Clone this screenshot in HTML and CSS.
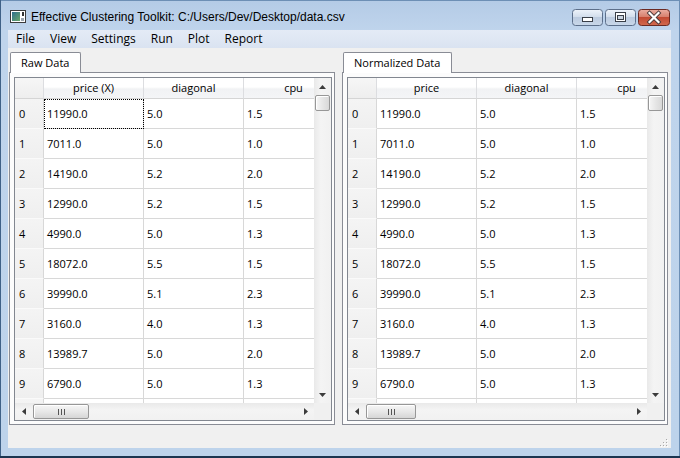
FILE: index.html
```html
<!DOCTYPE html>
<html>
<head>
<meta charset="utf-8">
<link rel="stylesheet" href="styles.css">
</head>
<body>
<div class="window">
  <div class="titlebar">
    <svg class="appicon" width="16" height="13" viewBox="0 0 16 13">
      <defs>
        <linearGradient id="ig" x1="0" y1="0" x2="1" y2="1">
          <stop offset="0" stop-color="#2e6f8e"/>
          <stop offset="1" stop-color="#6aa86a"/>
        </linearGradient>
      </defs>
      <rect x="0.5" y="0.5" width="15" height="12" fill="#fff" stroke="#3b3b3b"/>
      <rect x="2" y="2" width="8" height="9" fill="url(#ig)"/>
      <rect x="11" y="8" width="3" height="3" fill="#9aa4ae"/>
      <rect x="12" y="2" width="2" height="4" fill="#333"/>
    </svg>
    <span class="title">Effective Clustering Toolkit: C:/Users/Dev/Desktop/data.csv</span>
    <div class="caption-buttons">
      <svg class="cbtn" width="31" height="17" viewBox="0 0 31 17">
        <defs>
          <linearGradient id="bg1" x1="0" y1="0" x2="0" y2="1">
            <stop offset="0" stop-color="#eef3fa"/>
            <stop offset="0.45" stop-color="#d3deec"/>
            <stop offset="0.5" stop-color="#bccbdf"/>
            <stop offset="1" stop-color="#c9d8ea"/>
          </linearGradient>
        </defs>
        <rect x="0.5" y="0.5" width="30" height="16" rx="3" fill="url(#bg1)" stroke="#5c6f8a"/>
        <rect x="10.5" y="8.5" width="10" height="4" fill="#fff" stroke="#3a3f48"/>
      </svg>
      <svg class="cbtn" width="31" height="17" viewBox="0 0 31 17">
        <rect x="0.5" y="0.5" width="30" height="16" rx="3" fill="url(#bg1)" stroke="#5c6f8a"/>
        <rect x="10.5" y="3.5" width="10" height="9" fill="#fff" stroke="#3a3f48"/>
        <rect x="12.5" y="6.5" width="6" height="4" fill="#c8d2de" stroke="#3a3f48"/>
      </svg>
      <svg class="cbtn" width="32" height="17" viewBox="0 0 32 17">
        <defs>
          <linearGradient id="bg2" x1="0" y1="0" x2="0" y2="1">
            <stop offset="0" stop-color="#eaaea1"/>
            <stop offset="0.45" stop-color="#d7806e"/>
            <stop offset="0.5" stop-color="#c24a33"/>
            <stop offset="1" stop-color="#d26a4f"/>
          </linearGradient>
        </defs>
        <rect x="0.5" y="0.5" width="31" height="16" rx="3" fill="url(#bg2)" stroke="#6b2a22"/>
        <path d="M11.5 4 L20.5 13 M20.5 4 L11.5 13" stroke="#4a3a3a" stroke-width="4" stroke-linecap="square"/>
        <path d="M11.5 4 L20.5 13 M20.5 4 L11.5 13" stroke="#fff" stroke-width="2.2" stroke-linecap="square"/>
      </svg>
    </div>
  </div>

  <div class="client">
    <div class="menubar">
      <span class="menu">File</span>
      <span class="menu">View</span>
      <span class="menu">Settings</span>
      <span class="menu">Run</span>
      <span class="menu">Plot</span>
      <span class="menu">Report</span>
    </div>

    <div class="panes">
      <!-- Left tab widget -->
      <div class="tabwidget">
        <div class="tabbar"><div class="tab">Raw Data</div></div>
        <div class="pane">
          <div class="table">
            <div class="viewport">
              <div class="grid">
                <div class="hcell corner"></div><div class="hcell">price (X)</div><div class="hcell">diagonal</div><div class="hcell">cpu</div>
                <div class="rh">0</div><div class="cell focus">11990.0</div><div class="cell">5.0</div><div class="cell">1.5</div>
                <div class="rh">1</div><div class="cell">7011.0</div><div class="cell">5.0</div><div class="cell">1.0</div>
                <div class="rh">2</div><div class="cell">14190.0</div><div class="cell">5.2</div><div class="cell">2.0</div>
                <div class="rh">3</div><div class="cell">12990.0</div><div class="cell">5.2</div><div class="cell">1.5</div>
                <div class="rh">4</div><div class="cell">4990.0</div><div class="cell">5.0</div><div class="cell">1.3</div>
                <div class="rh">5</div><div class="cell">18072.0</div><div class="cell">5.5</div><div class="cell">1.5</div>
                <div class="rh">6</div><div class="cell">39990.0</div><div class="cell">5.1</div><div class="cell">2.3</div>
                <div class="rh">7</div><div class="cell">3160.0</div><div class="cell">4.0</div><div class="cell">1.3</div>
                <div class="rh">8</div><div class="cell">13989.7</div><div class="cell">5.0</div><div class="cell">2.0</div>
                <div class="rh">9</div><div class="cell">6790.0</div><div class="cell">5.0</div><div class="cell">1.3</div>
                <div class="rh"></div><div class="cell"></div><div class="cell"></div><div class="cell"></div>
              </div>
            </div>
            <div class="vscroll">
              <div class="sbtn"><svg width="7" height="4" viewBox="0 0 7 4"><path d="M0 4 L3.5 0 L7 4 Z" fill="#3c3c3c"/></svg></div>
              <div class="vthumb"></div>
              <div class="sfill"></div>
              <div class="sbtn"><svg width="7" height="4" viewBox="0 0 7 4"><path d="M0 0 L3.5 4 L7 0 Z" fill="#3c3c3c"/></svg></div>
            </div>
            <div class="hscroll">
              <div class="sbtn"><svg width="4" height="7" viewBox="0 0 4 7"><path d="M4 0 L0 3.5 L4 7 Z" fill="#3c3c3c"/></svg></div>
              <div class="hthumb wide"><span class="grip-lines"><i></i><i></i><i></i></span></div>
              <div class="sfill"></div>
              <div class="sbtn"><svg width="4" height="7" viewBox="0 0 4 7"><path d="M0 0 L4 3.5 L0 7 Z" fill="#3c3c3c"/></svg></div>
            </div>
            <div class="scorner"></div>
          </div>
        </div>
      </div>

      <!-- Right tab widget -->
      <div class="tabwidget">
        <div class="tabbar"><div class="tab">Normalized Data</div></div>
        <div class="pane">
          <div class="table">
            <div class="viewport">
              <div class="grid">
                <div class="hcell corner"></div><div class="hcell">price</div><div class="hcell">diagonal</div><div class="hcell">cpu</div>
                <div class="rh">0</div><div class="cell">11990.0</div><div class="cell">5.0</div><div class="cell">1.5</div>
                <div class="rh">1</div><div class="cell">7011.0</div><div class="cell">5.0</div><div class="cell">1.0</div>
                <div class="rh">2</div><div class="cell">14190.0</div><div class="cell">5.2</div><div class="cell">2.0</div>
                <div class="rh">3</div><div class="cell">12990.0</div><div class="cell">5.2</div><div class="cell">1.5</div>
                <div class="rh">4</div><div class="cell">4990.0</div><div class="cell">5.0</div><div class="cell">1.3</div>
                <div class="rh">5</div><div class="cell">18072.0</div><div class="cell">5.5</div><div class="cell">1.5</div>
                <div class="rh">6</div><div class="cell">39990.0</div><div class="cell">5.1</div><div class="cell">2.3</div>
                <div class="rh">7</div><div class="cell">3160.0</div><div class="cell">4.0</div><div class="cell">1.3</div>
                <div class="rh">8</div><div class="cell">13989.7</div><div class="cell">5.0</div><div class="cell">2.0</div>
                <div class="rh">9</div><div class="cell">6790.0</div><div class="cell">5.0</div><div class="cell">1.3</div>
                <div class="rh"></div><div class="cell"></div><div class="cell"></div><div class="cell"></div>
              </div>
            </div>
            <div class="vscroll">
              <div class="sbtn"><svg width="7" height="4" viewBox="0 0 7 4"><path d="M0 4 L3.5 0 L7 4 Z" fill="#3c3c3c"/></svg></div>
              <div class="vthumb"></div>
              <div class="sfill"></div>
              <div class="sbtn"><svg width="7" height="4" viewBox="0 0 7 4"><path d="M0 0 L3.5 4 L7 0 Z" fill="#3c3c3c"/></svg></div>
            </div>
            <div class="hscroll">
              <div class="sbtn"><svg width="4" height="7" viewBox="0 0 4 7"><path d="M4 0 L0 3.5 L4 7 Z" fill="#3c3c3c"/></svg></div>
              <div class="hthumb narrow"><span class="grip-lines"><i></i><i></i><i></i></span></div>
              <div class="sfill"></div>
              <div class="sbtn"><svg width="4" height="7" viewBox="0 0 4 7"><path d="M0 0 L4 3.5 L0 7 Z" fill="#3c3c3c"/></svg></div>
            </div>
            <div class="scorner"></div>
          </div>
        </div>
      </div>
    </div>

    <div class="statusbar">
      <svg class="sizegrip" width="8" height="8" viewBox="0 0 8 8">
        <g fill="#a8a8a8">
          <rect x="6" y="0" width="1" height="1"/>
          <rect x="3" y="3" width="1" height="1"/><rect x="6" y="3" width="1" height="1"/>
          <rect x="0" y="6" width="1" height="1"/><rect x="3" y="6" width="1" height="1"/><rect x="6" y="6" width="1" height="1"/>
        </g>
        <g fill="#ffffff">
          <rect x="7" y="1" width="1" height="1"/>
          <rect x="4" y="4" width="1" height="1"/><rect x="7" y="4" width="1" height="1"/>
          <rect x="1" y="7" width="1" height="1"/><rect x="4" y="7" width="1" height="1"/><rect x="7" y="7" width="1" height="1"/>
        </g>
      </svg>
    </div>
  </div>
</div>
</body>
</html>
```

FILE: styles.css
```css
* { box-sizing: border-box; }
html, body { margin: 0; padding: 0; }
body {
  width: 680px;
  height: 458px;
  overflow: hidden;
  background: #1b3550;
  font-family: "Open Sans", "Liberation Sans", sans-serif;
  color: #000;
}
.window {
  width: 680px;
  height: 456px;
  display: flex;
  flex-direction: column;
  padding: 0 9px 8px 8px;
  background: linear-gradient(#b4cbe6 0px, #bfd4ec 30px, #bdd3eb 100%);
  box-shadow: inset 1px 0 0 #3f6187, inset -1px 0 0 #6d8fb5, inset 0 1px 0 #6d8fb5;
}
.titlebar {
  height: 30px;
  display: flex;
  align-items: center;
  padding: 3px 1px 0 1px;
  flex: none;
}
.appicon { flex: none; margin-left: 1px; }
.title {
  margin-left: 5px;
  font-family: "Liberation Sans", "Open Sans", sans-serif;
  font-size: 12px;
  white-space: nowrap;
  color: #000;
}
.caption-buttons {
  margin-left: auto;
  display: flex;
  gap: 2px;
  margin-top: 1px;
}
.cbtn { display: block; }

.client {
  height: 418px;
  background: #f0f0f0;
  display: flex;
  flex-direction: column;
}
.menubar {
  height: 18px;
  flex: none;
  display: flex;
  align-items: center;
  gap: 15px;
  padding-left: 8px;
  font-size: 12px;
  background: linear-gradient(#e4ebf6, #dae3f1);
}
.menu { line-height: 18px; }

.panes {
  flex: none;
  height: 377px;
  padding: 4px 3px 0 1px;
  display: flex;
  gap: 7px;
}
.tabwidget {
  width: 326px;
  display: flex;
  flex-direction: column;
}
.tabbar {
  height: 20px;
  display: flex;
  align-items: flex-start;
}
.tab {
  position: relative;
  z-index: 1;
  height: 21px;
  margin-left: 1px;
  padding: 0 11px 0 10px;
  border: 1px solid #898c95;
  border-bottom: none;
  border-radius: 2px 2px 0 0;
  background: #ffffff;
  font-size: 11px;
  line-height: 19px;
  white-space: nowrap;
}
.pane {
  height: 353px;
  border: 1px solid #898c95;
  background: #fcfcfc;
  padding: 4px 2px 3px 4px;
}
.table {
  width: 318px;
  height: 344px;
  border: 1px solid #828790;
  background: #fff;
  display: grid;
  grid-template-columns: 299px 17px;
  grid-template-rows: 325px 17px;
}
.viewport {
  overflow: hidden;
  background: #fff;
}
.grid {
  display: grid;
  grid-template-columns: 29px 100px 100px 100px;
  grid-template-rows: 21px;
  grid-auto-rows: 30px;
  width: 329px;
  font-size: 11px;
}
.hcell {
  border-right: 1px solid #dcdde0;
  border-bottom: 1px solid #d5d5d5;
  background: linear-gradient(#ffffff 0%, #ffffff 45%, #f1f2f4 55%, #f4f5f7 100%);
  text-align: center;
  line-height: 20px;
  white-space: nowrap;
  overflow: hidden;
}
.hcell.corner {
  background: linear-gradient(#f6f6f6, #eeeeee);
}
.rh {
  border-right: 1px solid #d8d8d8;
  border-bottom: 1px solid #fafafa;
  background: linear-gradient(#f4f4f4, #efefef);
  padding: 1px 0 0 4px;
  line-height: 28px;
}
.cell {
  border-right: 1px solid #d8d8d8;
  border-bottom: 1px solid #d8d8d8;
  padding: 1px 0 0 3px;
  line-height: 28px;
  white-space: nowrap;
  overflow: hidden;
}
.cell.focus {
  outline: 1px dotted #000;
  outline-offset: -1px;
}

.vscroll {
  display: flex;
  flex-direction: column;
  background: linear-gradient(90deg, #e9e9e9, #f4f4f4 40%, #f1f1f1);
}
.hscroll {
  display: flex;
  background: linear-gradient(#e9e9e9, #f4f4f4 40%, #f1f1f1);
}
.sbtn {
  width: 17px;
  height: 17px;
  flex: none;
  display: flex;
  align-items: center;
  justify-content: center;
}
.sbtn svg { display: block; }
.sfill { flex: 1; }
.vthumb {
  flex: none;
  height: 16px;
  margin: 0 1px 0 1px;
  border: 1px solid #979797;
  border-radius: 2px;
  background: linear-gradient(90deg, #f6f6f6, #e6e6e6 50%, #d8d8d8);
  box-shadow: inset 1px 1px 0 #ffffff;
}
.hthumb {
  flex: none;
  height: 15px;
  margin: 1px 0;
  border: 1px solid #979797;
  border-radius: 2px;
  background: linear-gradient(#f6f6f6, #e8e8e8 50%, #d6d6d6);
  box-shadow: inset 1px 1px 0 #ffffff;
  display: flex;
  align-items: center;
  justify-content: center;
}
.hthumb.wide { width: 56px; margin-left: 1px; }
.hthumb.narrow { width: 50px; margin-left: 1px; }
.grip-lines { display: flex; gap: 2px; }
.grip-lines i {
  display: block;
  width: 1px;
  height: 6px;
  background: #555;
}
.scorner { background: #f0f0f0; }

.statusbar {
  flex: 1;
  display: flex;
  align-items: flex-end;
  justify-content: flex-end;
  padding: 0 3px 1px 0;
}
.sizegrip { display: block; }
```
